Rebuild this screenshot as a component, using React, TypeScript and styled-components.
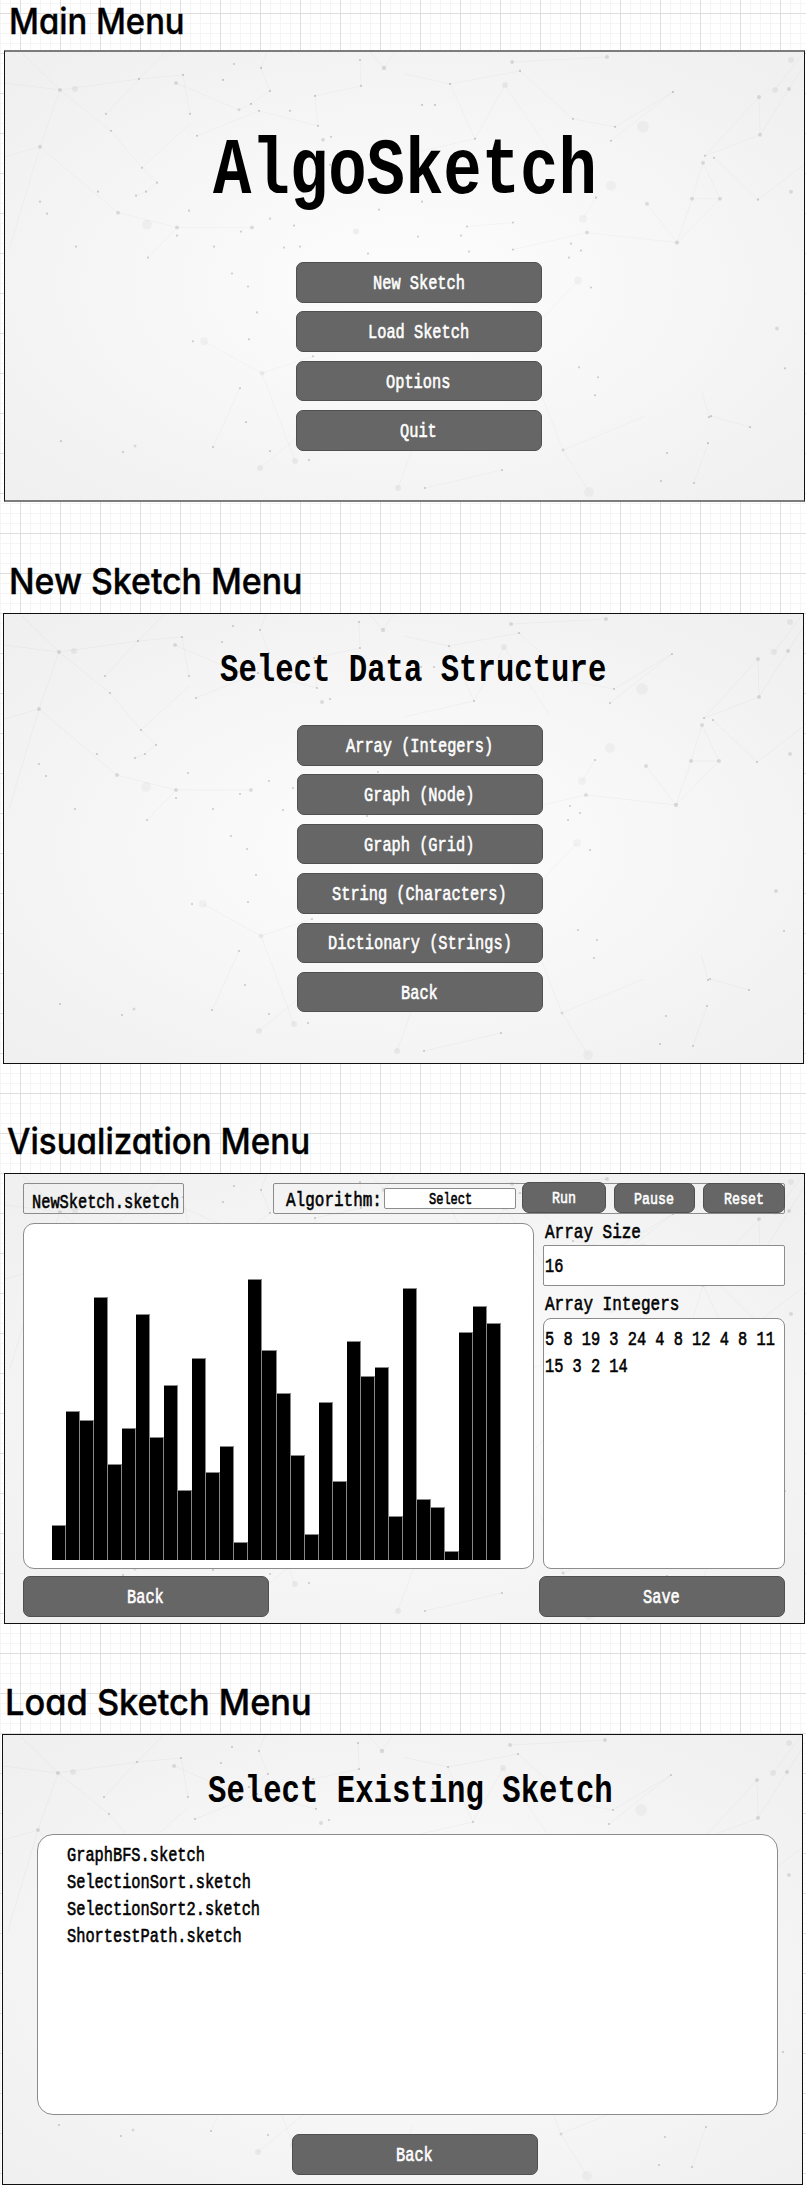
import React from "react";
import styled, { createGlobalStyle } from "styled-components";

const GlobalStyle = createGlobalStyle`
  * { box-sizing: border-box; }
  body { margin: 0; background: #fff; }
`;

/* ---------- text ---------- */

const Cell = styled.span<{ $width: number }>`
  display: inline-block;
  flex: none;
  width: ${(p) => p.$width}px;
`;

const Glyphs = styled.span<{ $size: number; $line: number }>`
  display: block;
  width: max-content;
  white-space: pre;
  font-family: "Liberation Mono", monospace;
  font-weight: ${(p) => (p.$size > 30 ? 700 : 400)};
  font-size: ${(p) => p.$size * 0.87}px;
  line-height: ${(p) => p.$line}px;
  -webkit-text-stroke: ${(p) => (p.$size > 30 ? 0 : 0.6)}px currentColor;
  transform: scale(0.766, ${(p) => (p.$size > 30 ? 0.96 : 1)});
  transform-origin: 0 50%;
`;

/* Narrow terminal lettering: every character is 0.4 of the nominal size wide. */
function TermText({ size = 23, line = 27, children }: { size?: number; line?: number; children: string }) {
  return (
    <Cell $width={children.length * size * 0.4}>
      <Glyphs $size={size} $line={line}>{children}</Glyphs>
    </Cell>
  );
}

/* ---------- page ---------- */

const Page = styled.main`
  width: 806px;
  height: 2185px;
  overflow: hidden;
  color: #000;
  background-color: #fff;
  background-image:
    linear-gradient(to right, #dfdfdf 1px, transparent 1px),
    linear-gradient(to bottom, #dfdfdf 1px, transparent 1px),
    linear-gradient(to right, #f5f5f5 1px, transparent 1px),
    linear-gradient(to bottom, #f5f5f5 1px, transparent 1px);
  background-size: 40px 40px, 40px 40px, 10px 10px, 10px 10px;
  background-position: 20px 13px, 20px 13px, 0 3px, 0 3px;
`;

const HeadingBar = styled.header<{ $height: number; $left: number; $bottom: number }>`
  display: flex;
  align-items: flex-end;
  height: ${(p) => p.$height}px;
  padding: 0 0 ${(p) => p.$bottom}px ${(p) => p.$left}px;
`;

const Heading = styled.h2<{ $stretch: number }>`
  margin: 0;
  font-family: Inter, "Open Sans", sans-serif;
  font-feature-settings: "cv11";
  font-weight: 500;
  font-size: 36px;
  line-height: 40px;
  white-space: nowrap;
  -webkit-text-stroke: 0.4px #000;
  transform: scaleX(${(p) => p.$stretch});
  transform-origin: 0 0;
`;

const Panel = styled.section<{ $left: number; $height?: number; $edge?: string }>`
  position: relative;
  isolation: isolate;
  display: flex;
  flex-direction: column;
  width: 801px;
  height: ${(p) => p.$height ?? 451}px;
  margin-left: ${(p) => p.$left}px;
  border: 1px solid #111;
  ${(p) => p.$edge && `border-top: 2px solid ${p.$edge}; border-bottom: 2px solid ${p.$edge};`}
`;

const Backdrop = styled.svg`
  position: absolute;
  inset: 0;
  z-index: -1;
  width: 100%;
  height: 100%;
`;

type Dot = [number, number, number?];

const DOTS: Dot[] = [
  [55, 38, 2], [70, 37, 3], [134, 27], [178, 23], [171, 31, 2], [101, 62], [106, 79], [185, 62], [192, 84],
  [35, 95, 2], [137, 116], [152, 131], [141, 140], [131, 144], [35, 150], [42, 162], [93, 140], [113, 161, 2],
  [142, 173, 5], [184, 159], [172, 176, 2], [172, 184], [247, 176, 2], [236, 180], [209, 195], [71, 195],
  [143, 206], [229, 12], [256, 16], [265, 39], [218, 28], [234, 58, 1.5], [246, 52], [254, 59], [285, 59],
  [310, 44], [356, 34], [355, 8], [379, 16, 2.2], [313, 74], [326, 85], [318, 88, 2], [325, 113], [374, 158],
  [351, 180, 3], [265, 167], [289, 174], [279, 196], [295, 195], [363, 202], [445, 32], [507, 10, 2], [515, 19],
  [500, 33, 3], [602, 5, 2], [568, 67], [668, 40], [610, 75], [606, 89], [638, 75, 6], [470, 87], [417, 53],
  [430, 53], [754, 45, 2], [755, 83, 2], [770, 38, 3], [784, 37, 2], [786, 8, 3], [700, 104], [709, 106],
  [698, 111, 2], [687, 147, 2], [715, 147, 2], [753, 148], [786, 140, 2], [642, 152, 2], [672, 191, 2.2],
  [606, 134, 5], [578, 167, 4], [591, 146], [582, 181, 2], [508, 198], [566, 192], [576, 199], [413, 185],
  [462, 175], [456, 184], [508, 171], [464, 200], [417, 150], [227, 222], [243, 235], [257, 322, 2.5],
  [199, 290, 4], [252, 261], [235, 337], [244, 288], [308, 305], [241, 371], [208, 396], [265, 400],
  [290, 410, 3], [255, 417, 3], [304, 409], [393, 437, 3], [420, 437], [497, 419], [558, 399, 1.5],
  [573, 229, 4], [586, 236], [590, 344], [593, 326], [574, 316], [564, 206], [584, 441, 5],
  [130, 395, 1.5], [56, 390], [118, 401], [188, 290], [662, 402], [703, 392], [704, 366], [706, 365],
  [745, 376], [689, 432], [656, 430], [772, 277, 2], [780, 317],
];

const LINKS: [number, number, number, number][] = [
  [18, 2, 55, 38], [0, 31, 55, 38], [55, 38, 134, 27], [55, 38, 106, 79], [106, 79, 137, 116], [55, 38, 35, 95],
  [134, 27, 178, 23], [134, 27, 101, 62], [134, 27, 160, 0], [171, 31, 234, 58], [178, 23, 185, 62],
  [137, 116, 185, 72], [137, 116, 152, 131], [141, 140, 152, 131], [131, 144, 141, 140], [35, 95, 0, 105],
  [35, 95, 113, 161], [35, 95, 5, 195], [113, 161, 172, 176], [172, 176, 247, 176], [172, 176, 143, 206],
  [192, 84, 254, 59], [234, 58, 246, 52], [246, 52, 265, 39], [256, 16, 265, 39], [256, 16, 262, 0],
  [254, 59, 313, 74], [310, 44, 356, 34], [310, 44, 313, 74], [355, 8, 356, 34], [379, 16, 365, 0],
  [379, 16, 390, 0], [445, 32, 515, 19], [445, 32, 470, 87], [500, 33, 470, 87], [500, 33, 545, 100],
  [515, 19, 568, 67], [507, 10, 602, 5], [568, 67, 610, 75], [610, 75, 668, 40], [606, 89, 668, 40],
  [470, 87, 400, 103], [400, 22, 445, 32], [754, 45, 755, 83], [754, 45, 700, 104], [755, 83, 700, 104],
  [755, 83, 784, 37], [784, 37, 800, 12], [770, 38, 799, 0], [698, 111, 687, 147], [698, 111, 715, 147],
  [687, 147, 715, 147], [715, 147, 672, 191], [687, 147, 672, 191], [709, 106, 753, 148], [753, 148, 800, 112],
  [642, 152, 672, 191], [582, 181, 672, 191], [582, 181, 508, 198], [591, 146, 578, 167], [508, 171, 462, 175],
  [199, 290, 257, 322], [257, 322, 308, 305], [235, 337, 208, 396], [257, 322, 290, 410], [255, 417, 300, 380],
  [558, 399, 535, 340], [558, 399, 584, 441], [420, 437, 497, 419], [393, 437, 410, 390], [573, 229, 530, 275],
  [704, 366, 697, 340], [706, 365, 745, 376], [703, 392, 689, 432], [558, 399, 640, 365],
];

function Network({ id }: { id: string }) {
  return (
    <Backdrop viewBox="0 0 799 449" preserveAspectRatio="none" aria-hidden="true">
      <defs>
        <radialGradient id={id} cx="50%" cy="52%" r="66%">
          <stop offset="0" stopColor="#fdfdfd" />
          <stop offset="0.4" stopColor="#f8f8f8" />
          <stop offset="1" stopColor="#f0f0f0" />
        </radialGradient>
      </defs>
      <rect width="799" height="449" fill={`url(#${id})`} />
      {LINKS.map(([x1, y1, x2, y2], i) => (
        <line key={i} x1={x1} y1={y1} x2={x2} y2={y2} stroke="#000" strokeOpacity="0.03" />
      ))}
      {DOTS.map(([x, y, r = 1.1], i) => (
        <circle key={i} cx={x} cy={y} r={r} fill="#000" fillOpacity={r > 3.5 ? 0.03 : r > 2.4 ? 0.05 : r > 1.2 ? 0.11 : 0.18} />
      ))}
    </Backdrop>
  );
}

/* ---------- controls ---------- */

const Button = styled.button<{ $width?: number; $height?: number }>`
  display: flex;
  flex: none;
  align-items: center;
  justify-content: center;
  width: ${(p) => p.$width ?? 246}px;
  height: ${(p) => p.$height ?? 40.5}px;
  padding: 2px 1px 0 0;
  border: 1px solid #505050;
  border-radius: 7px;
  background: #666;
  color: #fff;
`;

const Title = styled.h1<{ $top: number; $shift: number }>`
  display: flex;
  justify-content: center;
  margin: 0;
  padding: ${(p) => p.$top}px 0 0 ${(p) => p.$shift}px;
`;

const Menu = styled.nav<{ $top: number; $left: number }>`
  display: flex;
  flex-direction: column;
  gap: 8.9px;
  margin: ${(p) => p.$top}px 0 0 ${(p) => p.$left}px;
`;

const Box = styled.div<{ $radius?: number; $fill?: string }>`
  border: 1px solid #8c8c8c;
  border-radius: ${(p) => p.$radius ?? 2}px;
  background: ${(p) => p.$fill ?? "#fff"};
`;

const Toolbar = styled.div`
  display: flex;
  justify-content: space-between;
  height: 31px;
  margin: 9px 19px 0 18px;
`;

const FileName = styled(Box)`
  width: 161px;
  padding: 5px 0 0 8px;
`;

const AlgorithmBar = styled(Box)`
  display: flex;
  width: 512px;
  padding: 0 0 0 12px;
`;

const AlgorithmLabel = styled.div`
  padding-top: 3px;
`;

const Select = styled(Box)`
  display: flex;
  flex: none;
  justify-content: center;
  width: 132px;
  height: 21px;
  margin: 4px 6px 0 2px;
  padding: 1px 0 0 1px;
`;

const RunControls = styled.div`
  display: flex;
  align-items: flex-end;
  gap: 8px;
  height: 31px;
  margin-top: -2px;
`;

const Workspace = styled.div`
  display: flex;
  justify-content: space-between;
  height: 347px;
  margin: 9px 19px 0 18px;
`;

const Chart = styled(Box)`
  display: flex;
  align-items: flex-end;
  width: 511px;
  height: 346px;
  padding: 0 0 8px 28px;
`;

const Bar = styled.div<{ $value: number }>`
  width: 14.04px;
  height: ${(p) => p.$value * 8.77}px;
  border: solid #888;
  border-width: 1px 1px 0 0;
  background: #000;
`;

const Side = styled.div`
  display: flex;
  flex-direction: column;
  width: 242px;
  height: 346px;
`;

const FieldLabel = styled.div<{ $height: number; $top?: number }>`
  height: ${(p) => p.$height}px;
  padding: ${(p) => p.$top ?? 0}px 0 0 2px;
`;

const SizeField = styled(Box)`
  height: 41px;
  padding: 7px 0 0 1px;
`;

const Values = styled(Box)`
  display: flex;
  flex: 1;
  flex-direction: column;
  padding: 7px 0 0 1px;
`;

const Footer = styled.div`
  display: flex;
  justify-content: space-between;
  margin: 6px 19px 0 18px;
`;

const FileList = styled(Box)`
  display: flex;
  flex-direction: column;
  width: 741px;
  height: 281px;
  padding: 7px 0 0 29px;
`;

const ListSlot = styled.div<{ $top: number; $left: number }>`
  margin: ${(p) => p.$top}px 0 0 ${(p) => p.$left}px;
`;

const VALUES = [
  4, 17, 16, 30, 11, 15, 28, 14, 20, 8, 23, 10, 13, 2, 32, 24,
  19, 12, 3, 18, 9, 25, 21, 22, 5, 31, 7, 6, 1, 26, 29, 27,
];
const MAIN_ITEMS = ["New Sketch", "Load Sketch", "Options", "Quit"];
const STRUCTURES = [
  "Array (Integers)", "Graph (Node)", "Graph (Grid)", "String (Characters)", "Dictionary (Strings)", "Back",
];
const FILES = ["GraphBFS.sketch", "SelectionSort.sketch", "SelectionSort2.sketch", "ShortestPath.sketch"];

export default function App() {
  return (
    <>
      <GlobalStyle />
      <Page>
        <HeadingBar $height={50} $left={9} $bottom={9}>
          <Heading $stretch={0.911}>Main Menu</Heading>
        </HeadingBar>
        <Panel $left={4} $height={452} $edge="#7c7c7c">
          <Network id="glow-main" />
          <Title $top={75} $shift={0}><TermText size={96} line={90}>AlgoSketch</TermText></Title>
          <Menu $top={45} $left={291}>
            {MAIN_ITEMS.map((t) => <Button key={t}><TermText>{t}</TermText></Button>)}
          </Menu>
        </Panel>

        <HeadingBar $height={111} $left={9} $bottom={12}>
          <Heading $stretch={0.94}>New Sketch Menu</Heading>
        </HeadingBar>
        <Panel $left={3}>
          <Network id="glow-new" />
          <Title $top={32} $shift={20}><TermText size={46} line={50}>Select Data Structure</TermText></Title>
          <Menu $top={29} $left={293}>
            {STRUCTURES.map((t) => <Button key={t}><TermText>{t}</TermText></Button>)}
          </Menu>
        </Panel>

        <HeadingBar $height={109} $left={7} $bottom={12}>
          <Heading $stretch={0.92}>Visualization Menu</Heading>
        </HeadingBar>
        <Panel $left={4}>
          <Network id="glow-visual" />
          <Toolbar>
            <FileName $fill="transparent"><TermText>NewSketch.sketch</TermText></FileName>
            <AlgorithmBar $fill="transparent">
              <AlgorithmLabel><TermText size={24}>Algorithm:</TermText></AlgorithmLabel>
              <Select><TermText size={18} line={21}>Select</TermText></Select>
              <RunControls>
                <Button $width={84} $height={31}><TermText size={20}>Run</TermText></Button>
                <Button $width={81} $height={30}><TermText size={20}>Pause</TermText></Button>
                <Button $width={82} $height={30}><TermText size={20}>Reset</TermText></Button>
              </RunControls>
            </AlgorithmBar>
          </Toolbar>
          <Workspace>
            <Chart $radius={11}>
              {VALUES.map((v) => <Bar key={v} $value={v} />)}
            </Chart>
            <Side>
              <FieldLabel $height={22}><TermText size={24} line={20}>Array Size</TermText></FieldLabel>
              <SizeField><TermText>16</TermText></SizeField>
              <FieldLabel $height={32} $top={5}><TermText size={24}>Array Integers</TermText></FieldLabel>
              <Values $radius={8}>
                <TermText>5 8 19 3 24 4 8 12 4 8 11</TermText>
                <TermText>15 3 2 14</TermText>
              </Values>
            </Side>
          </Workspace>
          <Footer>
            <Button><TermText>Back</TermText></Button>
            <Button><TermText>Save</TermText></Button>
          </Footer>
        </Panel>

        <HeadingBar $height={110} $left={5} $bottom={12}>
          <Heading $stretch={0.955}>Load Sketch Menu</Heading>
        </HeadingBar>
        <Panel $left={2}>
          <Network id="glow-load" />
          <Title $top={32} $shift={16}><TermText size={46} line={50}>Select Existing Sketch</TermText></Title>
          <ListSlot $top={17} $left={34}>
            <FileList $radius={16}>
              {FILES.map((f) => <TermText key={f}>{f}</TermText>)}
            </FileList>
          </ListSlot>
          <Menu $top={19} $left={289}>
            <Button><TermText>Back</TermText></Button>
          </Menu>
        </Panel>
      </Page>
    </>
  );
}
